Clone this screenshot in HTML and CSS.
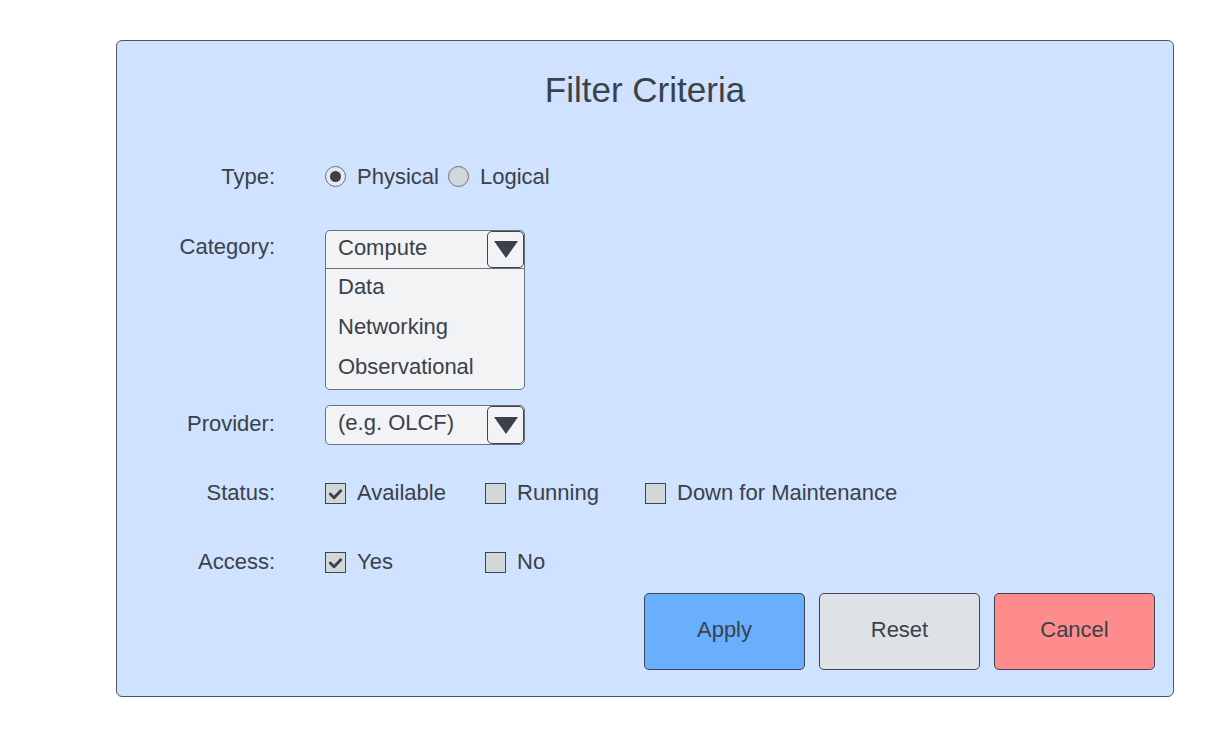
FILE: index.html
```html
<!DOCTYPE html>
<html lang="en">
<head>
<meta charset="utf-8">
<title>Filter Criteria</title>
<link rel="stylesheet" href="styles.css">
</head>
<body>
<div class="panel">
  <h1 class="title">Filter Criteria</h1>

  <div class="row row-type">
    <div class="label">Type:</div>
    <div class="control radios">
      <span class="option"><span class="radio checked"></span><span class="opt-text">Physical</span></span>
      <span class="option"><span class="radio"></span><span class="opt-text">Logical</span></span>
    </div>
  </div>

  <div class="row row-category">
    <div class="label label-select">Category:</div>
    <div class="control">
      <div class="select open">
        <div class="select-head">
          <span class="select-value">Compute</span>
          <span class="arrow-box"><span class="arrow"></span></span>
        </div>
        <ul class="select-list">
          <li>Data</li>
          <li>Networking</li>
          <li>Observational</li>
        </ul>
      </div>
    </div>
  </div>

  <div class="row row-provider">
    <div class="label label-select">Provider:</div>
    <div class="control">
      <div class="select">
        <div class="select-head">
          <span class="select-value">(e.g. OLCF)</span>
          <span class="arrow-box"><span class="arrow"></span></span>
        </div>
      </div>
    </div>
  </div>

  <div class="row row-status">
    <div class="label label-check">Status:</div>
    <div class="control checks">
      <span class="check-opt"><span class="checkbox checked"><svg viewBox="0 0 20 20" width="20" height="20"><path d="M4.5 10 L8.5 14 L15.5 6.5" fill="none" stroke="#3a414a" stroke-width="3" stroke-linecap="round" stroke-linejoin="round"/></svg></span><span>Available</span></span>
      <span class="check-opt"><span class="checkbox"></span><span>Running</span></span>
      <span class="check-opt"><span class="checkbox"></span><span>Down for Maintenance</span></span>
    </div>
  </div>

  <div class="row row-access">
    <div class="label label-check">Access:</div>
    <div class="control checks">
      <span class="check-opt"><span class="checkbox checked"><svg viewBox="0 0 20 20" width="20" height="20"><path d="M4.5 10 L8.5 14 L15.5 6.5" fill="none" stroke="#3a414a" stroke-width="3" stroke-linecap="round" stroke-linejoin="round"/></svg></span><span>Yes</span></span>
      <span class="check-opt"><span class="checkbox"></span><span>No</span></span>
    </div>
  </div>

  <div class="actions">
    <button class="btn btn-apply">Apply</button>
    <button class="btn btn-reset">Reset</button>
    <button class="btn btn-cancel">Cancel</button>
  </div>
</div>
</body>
</html>
```

FILE: styles.css
```css
* { box-sizing: border-box; }

html, body {
  margin: 0;
  padding: 0;
  background: #ffffff;
}

body {
  font-family: "Liberation Sans", Arial, sans-serif;
  color: #3a414a;
  font-size: 22px;
}

.panel {
  margin: 40px 0 0 116px;
  width: 1058px;
  background: #cfe2ff;
  border: 1px solid #4f5660;
  border-radius: 6px;
  padding: 28px 18px 26px 0;
  display: flex;
  flex-direction: column;
}

.title {
  margin: 0;
  font-size: 35px;
  font-weight: normal;
  line-height: 40px;
  height: 41px;
  padding-top: 1px;
  text-align: center;
  padding-left: 18px;
}

.row {
  display: grid;
  grid-template-columns: 158px 1fr;
  column-gap: 50px;
}

.label {
  text-align: right;
  white-space: nowrap;
}

.row-type { margin-top: 46px; height: 40px; line-height: 40px; }
.row-type .label { padding-top: 1px; }
.row-category { margin-top: 34px; }
.row-category .label { padding-top: 1px; }
.row-provider { margin-top: 15px; }
.row-provider .label { padding-top: 3px; }
.row-status { margin-top: 33px; height: 30px; line-height: 30px; }
.row-access { margin-top: 39px; height: 30px; line-height: 30px; }

.label-select {
  line-height: 32px;
}

/* radios */
.radios {
  display: flex;
  align-items: center;
}
.option {
  display: inline-flex;
  align-items: center;
  gap: 11px;
  margin-right: 9px;
}
.radio {
  width: 21px;
  height: 21px;
  border-radius: 50%;
  border: 1px solid #6b7078;
  background: #d3d6db;
  display: inline-flex;
  align-items: center;
  justify-content: center;
}
.radio.checked {
  background: #e6e8eb;
}
.radio.checked::after {
  content: "";
  width: 11px;
  height: 11px;
  border-radius: 50%;
  background: #3a414a;
}

/* selects */
.select {
  width: 200px;
  background: #f2f3f5;
  border: 1px solid #6b7078;
  border-radius: 5px;
}
.select-head {
  height: 38px;
  display: flex;
  justify-content: space-between;
  align-items: flex-start;
  padding-left: 12px;
}
.select.open .select-head {
  border-bottom: 1px solid #6b7078;
}
.select-value {
  line-height: 32px;
  padding-top: 1px;
}
.arrow-box {
  width: 37px;
  height: 37px;
  border: 1px solid #3f454d;
  border-radius: 5px;
  display: flex;
  align-items: center;
  justify-content: center;
  background: #f2f3f5;
}
.select:not(.open) .arrow-box { height: 38px; }
.arrow {
  width: 0;
  height: 0;
  border-left: 12px solid transparent;
  border-right: 12px solid transparent;
  border-top: 17px solid #3a414a;
}
.select-list {
  list-style: none;
  margin: 0;
  padding: 0;
}
.select-list li {
  height: 40px;
  line-height: 34px;
  padding-top: 1px;
  padding-left: 12px;
}

/* checkboxes */
.checks {
  display: grid;
  grid-template-columns: 160px 160px 1fr;
  align-items: center;
}
.check-opt {
  display: inline-flex;
  align-items: center;
  gap: 11px;
  white-space: nowrap;
}
.checkbox {
  width: 21px;
  height: 21px;
  border: 1px solid #3f454d;
  background: #d3d6db;
  margin-top: 1px;
  display: inline-flex;
  align-items: center;
  justify-content: center;
  flex: none;
}
.checkbox svg { display: block; }

/* buttons */
.actions {
  margin-top: 16px;
  display: flex;
  justify-content: flex-end;
  gap: 14px;
}
.btn {
  width: 161px;
  height: 77px;
  border: 1px solid #3f454d;
  border-radius: 5px;
  font-family: "Liberation Sans", Arial, sans-serif;
  font-size: 22px;
  color: #3a414a;
  padding: 0 0 3px 0;
}
.btn-apply { background: #6aaefe; }
.btn-reset { background: #dee1e6; }
.btn-cancel { background: #ff8c8c; }
```
